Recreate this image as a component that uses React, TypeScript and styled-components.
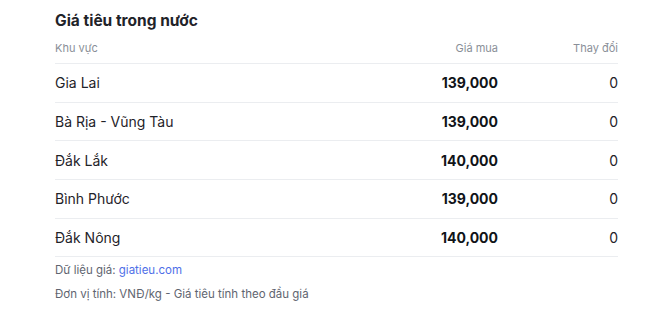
import styled, { createGlobalStyle } from 'styled-components';

const GlobalStyle = createGlobalStyle`
  html, body {
    margin: 0;
    padding: 0;
    background: #ffffff;
    font-family: Inter, "Noto Sans", sans-serif;
    color: #1f2329;
  }
`;

const Panel = styled.section`
  width: 563px;
  padding: 9px 0 0 55px;
`;

const Title = styled.h2`
  margin: 0;
  font-size: 15.5px;
  line-height: 24px;
  font-weight: 700;
  color: #1f2329;
`;

const Row = styled.div<{ $head?: boolean }>`
  display: grid;
  grid-template-columns: 1fr 120px 120px;
  align-items: center;
  height: ${({ $head }) => ($head ? '30px' : '37.7px')};
  border-bottom: 1px solid #ebedf0;
  font-size: ${({ $head }) => ($head ? '11px' : '14px')};
  color: ${({ $head }) => ($head ? '#8a8f98' : '#1f2329')};
`;

const Cell = styled.div<{ $right?: boolean }>`
  text-align: ${({ $right }) => ($right ? 'right' : 'left')};
`;

const Price = styled(Cell)`
  font-size: 14px;
  font-weight: 700;
  color: #111418;
`;

const Footer = styled.div`
  display: flex;
  flex-direction: column;
  gap: 6px;
  margin-top: 4px;
  font-size: 11.5px;
  line-height: 18px;
  color: #5f6570;
`;

const Link = styled.a`
  color: #4f6fe8;
  text-decoration: none;
`;

const rows = [
  { region: 'Gia Lai', price: '139,000', change: '0' },
  { region: 'Bà Rịa - Vũng Tàu', price: '139,000', change: '0' },
  { region: 'Đắk Lắk', price: '140,000', change: '0' },
  { region: 'Bình Phước', price: '139,000', change: '0' },
  { region: 'Đắk Nông', price: '140,000', change: '0' }
];

export default function App() {
  return (
    <>
      <GlobalStyle />
      <Panel>
        <Title>Giá tiêu trong nước</Title>
        <Row $head>
          <Cell>Khu vực</Cell>
          <Cell $right>Giá mua</Cell>
          <Cell $right>Thay đổi</Cell>
        </Row>
        {rows.map((r) => (
          <Row key={r.region}>
            <Cell>{r.region}</Cell>
            <Price $right>{r.price}</Price>
            <Cell $right>{r.change}</Cell>
          </Row>
        ))}
        <Footer>
          <div>
            Dữ liệu giá: <Link href="#">giatieu.com</Link>
          </div>
          <div>Đơn vị tính: VNĐ/kg - Giá tiêu tính theo đầu giá</div>
        </Footer>
      </Panel>
    </>
  );
}
